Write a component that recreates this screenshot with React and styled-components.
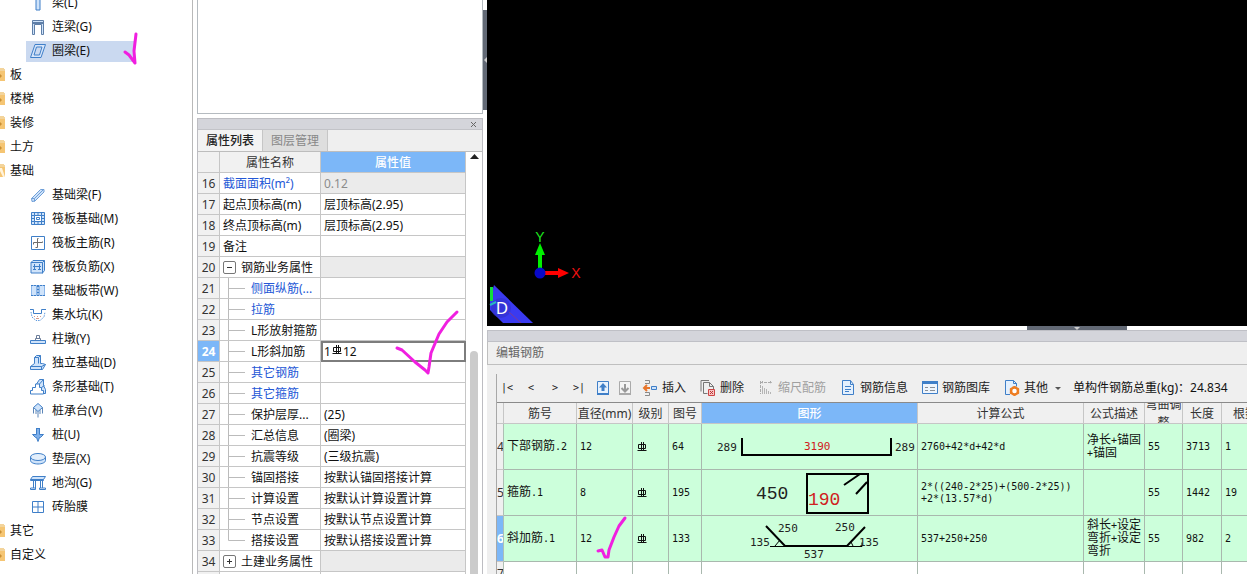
import React from 'react';
import styled, { createGlobalStyle } from 'styled-components';

const colors = {
  line: '#c6c6c6',
  panel: '#efefef',
  bar: '#d4d5db',
  blue: '#7cb7f8',
  link: '#2457d6',
  green: '#ccffdb',
  icon: '#3f7fc8',
  iconFill: '#cfe3fa',
  ink: '#f01fe0',
};

const GlobalStyle = createGlobalStyle`
  * {
    box-sizing: border-box;
  }
  body {
    margin: 0;
    background: #fff;
    color: #111;
    font: 12px/18px 'Noto Sans', 'Noto Sans CJK SC', sans-serif;
  }
  button {
    border: 0;
    padding: 0;
    background: none;
    color: inherit;
    font: inherit;
  }
  table {
    border-collapse: separate;
    border-spacing: 0;
    table-layout: fixed;
  }
  svg {
    display: block;
    flex: none;
  }
`;

const Main = styled.div`
  display: flex;
  height: 100vh;
  overflow: hidden;
`;

/* component tree */

const Sidebar = styled.nav`
  flex: 0 0 193px;
  border-right: 1px solid #b9b9b9;
  overflow: hidden;
`;

const Tree = styled.ul`
  list-style: none;
  margin: -9px 0 0;
  padding: 0;
`;

const TreeRow = styled.li`
  display: flex;
  align-items: center;
  height: 24px;
  padding-left: ${(p) => (p.$child ? '26px' : '0')};
`;

const TreeButton = styled.button`
  position: relative;
  display: flex;
  align-items: center;
  gap: ${(p) => (p.$child ? '6px' : '4px')};
  width: ${(p) => (p.$child ? '108px' : 'auto')};
  height: 21px;
  padding-left: ${(p) => (p.$child ? '4px' : '0')};
  background: ${(p) => (p.$selected ? '#cad9f0' : 'none')};
  white-space: nowrap;
`;

const Ink = styled.svg`
  position: absolute;
  z-index: 2;
  left: ${(p) => p.$left}px;
  top: ${(p) => p.$top}px;
  overflow: visible;
  fill: none;
  stroke: ${colors.ink};
  stroke-width: 3;
  stroke-linecap: round;
  stroke-linejoin: round;
  pointer-events: none;
`;

const Glyph = ({ children }) => (
  <svg
    width="16"
    height="16"
    viewBox="0 0 16 16"
    fill="none"
    stroke={colors.icon}
    strokeWidth="1"
    aria-hidden="true"
  >
    {children}
  </svg>
);

const Folder = ({ open }) => (
  <svg width="6" height="14" viewBox="0 0 6 14" aria-hidden="true">
    <path d="M0 0h4v1h1v2H0z" fill="#f3d49b" />
    <path d="M0 3h5v10H0z" fill="#f5c573" />
    {open ? (
      <path d="M0 4h2l3 9H3L0 7z" fill="#fff3dc" />
    ) : (
      <path d="M0 6l2 2-2 2z" fill="#c98f35" />
    )}
  </svg>
);

const fill = colors.iconFill;

const treeIcons = {
  beam: <path d="M4 0l2 4v11h4V4l2-4M6 4h4" fill={fill} />,
  linkBeam: (
    <>
      <path d="M2.500 1.500h11v14h-2v-10h-7v10h-2z" fill={fill} stroke="#5f7fa8" />
      <path d="M2.500 4h11" stroke="#5f7fa8" strokeWidth="2" />
    </>
  ),
  ringBeam: (
    <path
      d="M5 1.500h10.500L11 14.500H.5zM6.500 4h5.500L9.500 12H4z"
      fill="#d8e6fa"
      fillRule="evenodd"
    />
  ),
  foundBeam: (
    <>
      <path d="M1.500 11.500l9-9 3.500 0 0 2.500-9 9-3 .5z" fill={fill} stroke="#6f9fd8" />
      <path d="M1.500 11.500h3v3M4.500 11.500l9-9" stroke="#6f9fd8" />
    </>
  ),
  raft: (
    <>
      <path d="M1.500 1.500h13v12h-13z" fill={fill} />
      <path d="M4.500 4.500h7v6h-7z" fill="#fff" />
      <path d="M4.500 1.500v3M8 1.500v3M11.500 1.500v3M4.500 10.500v3M8 10.500v3M11.500 10.500v3M1.500 4.500h3M1.500 7.500h3M1.500 10.500h3M11.500 4.500h3M11.500 7.500h3M11.500 10.500h3M6.500 6.500h3v2h-3z" />
    </>
  ),
  raftMain: (
    <>
      <path d="M1.500 1.500h13v13h-13z" />
      <path d="M8.500 3.500h-1v9h-2M3.500 9.500v-2h9v-1" stroke="#6d6d6d" />
    </>
  ),
  raftNeg: (
    <>
      <path d="M1 3.500l2-2h11.500v10l-2 2.500H1z" fill={fill} />
      <path d="M1 3.500h11.500v11M12.500 3.500l2-2M4.500 5v6M9.500 5v6M3 10.500h3M8 10.500h3M3 7.500h8" />
    </>
  ),
  strip: (
    <>
      <path d="M1.500 2.500h5v10h-5zM9.500 2.500h5v10h-5z" fill={fill} stroke="#8bb6ea" />
      <path d="M1 2.500h14M1 12.500h14M7.500 2.500v10M8.500 2.500v10" strokeDasharray="2 1" />
    </>
  ),
  pit: (
    <>
      <path d="M0 2.500h3.500v4h8v-4H16" />
      <path d="M1 5l1 5 4 3.500h4l4-3.500 1-5" stroke="#5f9ade" strokeDasharray="1.500 1" />
      <path d="M4 9.500h1M7 9.500h1M10 9.500h1M6 11.500h3" stroke="#d39a8a" />
    </>
  ),
  pier: (
    <>
      <path d="M.5 9.500h15v3H.5z" fill={fill} />
      <path d="M5.500 9.500v-2h5v2M6.500 7.500v-3h3v3" stroke="#6b7d99" />
    </>
  ),
  isolated: (
    <>
      <path d="M.5 11.500l4-3V2.500l2-2h4v8h2l3 1-3 5H.5z" fill={fill} />
      <path d="M4.500 2.500h4v6M8.500 2.500l2-2M.5 11.500h11l4-2M11.500 11.500v3" />
    </>
  ),
  stripFound: (
    <>
      <path d="M6.500 5l3-4.500h4v6l2 4v4h-5z" fill={fill} />
      <path d="M.5 15v-3.500h2v-3h3V5h4v3.500h2v3h2V15z" fill="#fff" />
      <path d="M9.500 5l4-4.500M11.500 8.500l3-2" />
    </>
  ),
  pileCap: (
    <>
      <path d="M8 .5l4.500 4L8 8.500l-4.500-4z" fill={fill} />
      <path d="M3.500 4.500v6M12.500 4.500v6M8 8.500v6M6 7v4M10 7v4" stroke="#5c86b8" />
    </>
  ),
  pile: (
    <>
      <path d="M6.500 1.500h3v6h4l-3 3h-1l-1.500 4-1.500-4h-1l-3-3h4z" fill="#7fb0ea" />
      <path d="M6 1.500h4" />
    </>
  ),
  cushion: (
    <>
      <path d="M.5 6v3.500c0 2 3.500 3.500 7.500 3.500s7.500-1.500 7.500-3.500V6" fill={fill} />
      <ellipse cx="8" cy="6" rx="7.500" ry="3.500" fill="#e2eefb" />
    </>
  ),
  trench: (
    <>
      <path d="M.5 4.500l2-3h13l-2 3zM3.500 5v8M5.500 5v8M10.500 5v8M12.500 5v8" fill={fill} />
      <path d="M.5 4.500v1h13v-1M.5 14.500v-1.500h5v1.500zM9.500 14.500v-1.500h6v1.500z" />
    </>
  ),
  brick: (
    <>
      <path d="M2.500 2.500h11v11h-11z" />
      <path d="M8 2.500v11M2.500 8h11" />
    </>
  ),
};

const treeItems = [
  { label: '梁(L)', icon: 'beam' },
  { label: '连梁(G)', icon: 'linkBeam' },
  { label: '圈梁(E)', icon: 'ringBeam', selected: true },
  { label: '板' },
  { label: '楼梯' },
  { label: '装修' },
  { label: '土方' },
  { label: '基础', open: true },
  { label: '基础梁(F)', icon: 'foundBeam' },
  { label: '筏板基础(M)', icon: 'raft' },
  { label: '筏板主筋(R)', icon: 'raftMain' },
  { label: '筏板负筋(X)', icon: 'raftNeg' },
  { label: '基础板带(W)', icon: 'strip' },
  { label: '集水坑(K)', icon: 'pit' },
  { label: '柱墩(Y)', icon: 'pier' },
  { label: '独立基础(D)', icon: 'isolated' },
  { label: '条形基础(T)', icon: 'stripFound' },
  { label: '桩承台(V)', icon: 'pileCap' },
  { label: '桩(U)', icon: 'pile' },
  { label: '垫层(X)', icon: 'cushion' },
  { label: '地沟(G)', icon: 'trench' },
  { label: '砖胎膜', icon: 'brick' },
  { label: '其它' },
  { label: '自定义' },
];

const ComponentTree = () => (
  <Sidebar>
    <Tree>
      {treeItems.map((item) => (
        <TreeRow key={item.label} $child={!!item.icon}>
          <TreeButton type="button" $child={!!item.icon} $selected={item.selected}>
            {item.icon ? <Glyph>{treeIcons[item.icon]}</Glyph> : <Folder open={item.open} />}
            {item.label}
            {item.selected && (
              <Ink $left={98} $top={-8} width="16" height="32">
                <path d="M1 19l4 3 6 8-1-12 2-17" />
              </Ink>
            )}
          </TreeButton>
        </TreeRow>
      ))}
    </Tree>
  </Sidebar>
);

/* property list */

const Middle = styled.section`
  flex: 0 0 286px;
  display: flex;
  flex-direction: column;
  gap: 4px;
  margin-left: 4px;
`;

const UpperPanel = styled.div`
  flex: 0 0 114px;
  border: 1px solid #b5bbc0;
  border-top: 0;
`;

const Panel = styled.div`
  flex: 1;
  min-height: 0;
  display: flex;
  flex-direction: column;
  border: 1px solid #bdbdc2;
  border-bottom: 0;
`;

const PanelBar = styled.div`
  display: flex;
  justify-content: flex-end;
  align-items: center;
  height: 11px;
  padding-right: 5px;
  background: ${colors.bar};
  border-bottom: 1px solid #c2c3c8;
`;

const CloseButton = styled.button`
  width: 7px;
  height: 7px;
`;

const Tabs = styled.div`
  display: flex;
  height: 22px;
  background: ${colors.panel};
  border-bottom: 1px solid #bdbdbd;
`;

const Tab = styled.button`
  width: 65px;
  border-right: 1px solid ${colors.line};
  background: ${(p) => (p.$active ? '#f3f3f3' : '#dedede')};
  color: ${(p) => (p.$active ? '#222' : '#888')};
  font-weight: ${(p) => (p.$active ? 500 : 400)};
`;

const PanelBody = styled.div`
  flex: 1;
  min-height: 0;
  display: flex;
  overflow: hidden;
`;

const PropTable = styled.table`
  flex: none;
  width: 268px;
  height: max-content;
`;

const PropHead = styled.th`
  height: 21px;
  padding: 1px 0 0;
  border-right: 1px solid ${colors.line};
  border-bottom: 1px solid ${colors.line};
  background: ${(p) => (p.$active ? colors.blue : '#f1f1f1')};
  color: ${(p) => (p.$active ? '#fff' : '#333')};
  font-weight: ${(p) => (p.$active ? 500 : 400)};
`;

const RowNumber = styled.th`
  height: 21px;
  padding: 1px 0 0;
  border-right: 1px solid ${colors.line};
  border-bottom: 1px solid ${colors.line};
  background: ${(p) => (p.$active ? colors.blue : '#f1f1f1')};
  color: ${(p) => (p.$active ? '#fff' : '#333')};
  font-weight: ${(p) => (p.$active ? 700 : 400)};
`;

const PropName = styled.td`
  height: 21px;
  padding: 0 0 0 3px;
  border-right: 1px solid ${colors.line};
  border-bottom: 1px solid ${colors.line};
  color: ${(p) => (p.$link ? colors.link : '#111')};
  white-space: nowrap;
  overflow: hidden;
`;

const NameLine = styled.div`
  display: flex;
  align-items: center;
  height: 20px;
  line-height: 18px;
`;

const NameText = styled.span`
  padding-top: 1px;
`;

const PropValue = styled.td`
  position: relative;
  height: 21px;
  padding: ${(p) => (p.$focused ? '0 0 0 1px' : '1px 0 0 3px')};
  border: ${(p) => (p.$focused ? '2px solid #7d7d7d' : 'solid ' + colors.line)};
  border-width: ${(p) => (p.$focused ? '2px' : '0 1px 1px 0')};
  background: ${(p) => (p.$locked ? '#ebebeb' : '#fff')};
  color: ${(p) => (p.$muted ? '#8c8c8c' : '#111')};
  line-height: ${(p) => (p.$focused ? '16px' : '18px')};
  white-space: nowrap;
  outline: none;
`;

const ValueLine = styled.span`
  display: flex;
`;

const Branch = styled.svg`
  margin-right: 6px;
`;

const Expander = styled.button`
  display: flex;
  align-items: center;
  justify-content: center;
  width: 13px;
  height: 13px;
  margin-right: 5px;
  border: 1px solid #777;
  border-radius: 2px;
  background: #fff;
`;

const ScrollGutter = styled.div`
  flex: 1;
  display: flex;
  flex-direction: column;
  align-items: center;
  padding-top: 2px;
`;

const ScrollThumb = styled.div`
  flex: 1;
  width: 8px;
  margin-top: 192px;
  border-radius: 4px 4px 0 0;
  background: #cbcbcb;
`;

const Rebar = () => (
  <svg width="12" height="12" viewBox="0 0 12 12" fill="none" stroke="#111" aria-label="HRB400">
    <path d="M2.500 3.500h7v4h-7zM5.500 1v9M7.500 1v9M1.500 9.500h9" />
  </svg>
);

const props = [
  { n: 16, name: '截面面积(m²)', value: '0.12', link: true, locked: true, muted: true },
  { n: 17, name: '起点顶标高(m)', value: '层顶标高(2.95)' },
  { n: 18, name: '终点顶标高(m)', value: '层顶标高(2.95)' },
  { n: 19, name: '备注', value: '' },
  { n: 20, name: '钢筋业务属性', value: '', group: 'open', locked: true },
  { n: 21, name: '侧面纵筋(...', value: '', child: true, link: true },
  { n: 22, name: '拉筋', value: '', child: true, link: true },
  { n: 23, name: 'L形放射箍筋', value: '', child: true },
  { n: 24, name: 'L形斜加筋', value: 'rebar', child: true, focused: true },
  { n: 25, name: '其它钢筋', value: '', child: true, link: true },
  { n: 26, name: '其它箍筋', value: '', child: true, link: true },
  { n: 27, name: '保护层厚...', value: '(25)', child: true },
  { n: 28, name: '汇总信息', value: '(圈梁)', child: true },
  { n: 29, name: '抗震等级', value: '(三级抗震)', child: true },
  { n: 30, name: '锚固搭接', value: '按默认锚固搭接计算', child: true },
  { n: 31, name: '计算设置', value: '按默认计算设置计算', child: true },
  { n: 32, name: '节点设置', value: '按默认节点设置计算', child: true },
  { n: 33, name: '搭接设置', value: '按默认搭接设置计算', child: true, last: true },
  { n: 34, name: '土建业务属性', value: '', group: 'closed', locked: true },
];

const PropertyPanel = () => (
  <Middle>
    <UpperPanel />
    <Panel>
      <PanelBar>
        <CloseButton type="button" aria-label="关闭">
          <svg width="7" height="7" viewBox="0 0 7 7" stroke="#666">
            <path d="M1 1l5 5M6 1l-5 5" />
          </svg>
        </CloseButton>
      </PanelBar>
      <Tabs>
        <Tab type="button" $active>
          属性列表
        </Tab>
        <Tab type="button">图层管理</Tab>
      </Tabs>
      <PanelBody>
        <PropTable>
          <colgroup>
            <col width="22" />
            <col width="101" />
            <col width="145" />
          </colgroup>
          <thead>
            <tr>
              <PropHead />
              <PropHead>属性名称</PropHead>
              <PropHead $active>属性值</PropHead>
            </tr>
          </thead>
          <tbody>
            {props.map((row) => (
              <tr key={row.n}>
                <RowNumber scope="row" $active={row.focused}>
                  {row.n}
                </RowNumber>
                <PropName $link={row.link}>
                  <NameLine>
                    {row.child && (
                      <Branch width="22" height="20" viewBox="0 0 22 20" stroke="#bbb" fill="none">
                        <path d={row.last ? 'M5.500 0v10.500H22' : 'M5.500 0v20M5.500 10.500H22'} />
                      </Branch>
                    )}
                    {row.group && (
                      <Expander type="button" aria-label={row.name}>
                        <svg width="7" height="7" viewBox="0 0 7 7" stroke="#333">
                          <path d={row.group === 'open' ? 'M1 3.500h5' : 'M1 3.500h5M3.500 1v5'} />
                        </svg>
                      </Expander>
                    )}
                    <NameText>{row.name}</NameText>
                  </NameLine>
                </PropName>
                <PropValue
                  $locked={row.locked}
                  $muted={row.muted}
                  $focused={row.focused}
                  tabIndex={row.focused ? 0 : undefined}
                >
                  {row.focused ? (
                    <>
                      <ValueLine>
                        1<Rebar />
                        12
                      </ValueLine>
                      <Ink $left={73} $top={-31} width="64" height="64">
                        <path d="M1 36l5 2 13 12 10 8 3 3 1-6 2-14 8-19 8-12 10-10" />
                      </Ink>
                    </>
                  ) : (
                    row.value
                  )}
                </PropValue>
              </tr>
            ))}
            <tr>
              <RowNumber />
              <PropName />
              <PropValue />
            </tr>
          </tbody>
        </PropTable>
        <ScrollGutter>
          <svg width="9" height="5" viewBox="0 0 9 5">
            <path d="M0 5l4.500-5L9 5z" fill="#222" />
          </svg>
          <ScrollThumb />
        </ScrollGutter>
      </PanelBody>
    </Panel>
  </Middle>
);

/* splitters */

const SideSplitter = styled.div`
  flex: 0 0 4px;
  padding-top: 10px;
`;

const SideHandle = styled.button`
  display: flex;
  align-items: center;
  width: 4px;
  height: 100px;
  background: #626975;
`;

const BottomSplitter = styled.div`
  flex: 0 0 4px;
  display: flex;
  padding-left: 540px;
`;

const BottomHandle = styled.button`
  display: flex;
  justify-content: center;
  width: 100px;
  height: 4px;
  background: #626975;
`;

/* drawing area */

const Work = styled.main`
  flex: 1;
  min-width: 0;
  display: flex;
  flex-direction: column;
`;

const Viewport = styled.div`
  flex: 1;
  min-height: 0;
  display: flex;
  align-items: flex-end;
  background: #000;
  overflow: hidden;
`;

const Axes = () => (
  <svg width="130" height="100" viewBox="0 0 130 100">
    <path d="M53 47V28" stroke="#00f000" strokeWidth="4" />
    <path d="M53 17l5 12H48z" fill="#00f000" />
    <path d="M53 47h18" stroke="#f00" strokeWidth="4" />
    <path d="M82 47l-11 5V42z" fill="#f00" />
    <circle cx="53" cy="47" r="5.500" fill="#0808c8" />
    <text x="53" y="16" textAnchor="middle" fill="#1ee61e" fontFamily="Liberation Sans" fontSize="14">
      Y
    </text>
    <text x="89" y="52" textAnchor="middle" fill="#e11" fontFamily="Liberation Sans" fontSize="14">
      X
    </text>
    <path d="M3 73l4-14 39 38H16L3 84z" fill="#3a3af0" />
    <circle cx="14" cy="82" r="10" fill="#3030c8" opacity=".6" />
    <path d="M3 61h3v14H3z" fill="#12e03c" />
    <path d="M3 79l6-3" stroke="#29b8c0" strokeWidth="2" />
    <path d="M22 86l12 11" stroke="#7a3a9a" />
    <text x="15" y="88" textAnchor="middle" fill="#fff" fontFamily="Noto Sans" fontSize="17">
      D
    </text>
  </svg>
);

/* rebar editor */

const Editor = styled.section`
  flex: 0 0 244px;
  display: flex;
  flex-direction: column;
  background: ${colors.panel};
  overflow: hidden;
`;

const EditorBar = styled.div`
  flex: 0 0 12px;
  background: ${colors.bar};
  border: 1px solid #bfc0c6;
  border-right: 0;
`;

const EditorTitle = styled.h2`
  flex: 0 0 22px;
  margin: 0;
  padding-left: 8px;
  border: solid #bfbfbf;
  border-width: 0 0 1px 1px;
  color: #666;
  font-size: 12px;
  font-weight: 400;
  line-height: 22px;
`;

const EditorBody = styled.div`
  flex: 1;
  min-height: 0;
  margin: 9px 0 0 9px;
  border-left: 1px solid #a8a8a8;
  overflow: hidden;
`;

const Toolbar = styled.div`
  display: flex;
  align-items: center;
  height: 28px;
  white-space: nowrap;
`;

const NavGroup = styled.div`
  display: flex;
  gap: 4px;
  margin-right: 6px;
`;

const NavButton = styled.button`
  width: 20px;
  height: 20px;
  color: #222;
  font: 10px/20px 'DejaVu Sans Mono', monospace;
`;

const MoveGroup = styled.div`
  display: flex;
  gap: 6px;
  margin-right: 9px;
`;

const ToolGroup = styled.div`
  display: flex;
  gap: 14px;
  margin-right: 12px;
`;

const ToolButton = styled.button`
  display: flex;
  align-items: center;
  gap: 4px;
  height: 20px;
  color: ${(p) => (p.disabled ? '#a0a0a0' : '#222')};
`;

const Caret = styled.span`
  margin-left: 3px;
  border: solid transparent;
  border-width: 3px 3px 0;
  border-top-color: #555;
`;

const toolIcons = {
  up: (
    <>
      <path d="M2.500 1.500h11v12h-11z" fill="#e8f2fd" />
      <path d="M2 14h12" strokeWidth="2" />
      <path d="M8 3l4 4.500H9.500V11h-3V7.500H4z" fill={colors.icon} stroke="none" />
    </>
  ),
  down: (
    <>
      <path d="M2.500 1.500h11v12h-11z" stroke="#aaa" fill="#f4f4f4" />
      <path d="M2 14h12" stroke="#aaa" strokeWidth="2" />
      <path d="M8 4v7M4.500 8L8 11.500 11.500 8" stroke="#999" strokeWidth="2" />
    </>
  ),
  insert: (
    <>
      <path d="M3 .5h4.500v3H3M3 15.500h4.500v-3H3" stroke="#888" />
      <path d="M2 8h6M5 5L2 8l3 3" stroke="#e8762c" strokeWidth="2" />
      <path d="M9.500 6.500h5v3h-5z" fill={fill} />
    </>
  ),
  remove: (
    <>
      <path d="M1 11.500V.5h8M3.500 13.500v-11h6l4 4v3M3.500 13.500h4M9.500 2.500v4h4" stroke="#777" />
      <path d="M8.500 9.500h6v6h-6z" fill="#f7c4c4" stroke="#c44" />
      <path d="M10 11l3 3M13 11l-3 3" stroke="#b33" />
    </>
  ),
  scale: (
    <>
      <path d="M2.500 1v13M2 2.500h12M5 1L3.500 2.500 5 4M12 1l1.500 1.500L12 4" stroke="#aaa" strokeDasharray="3 1" />
      <path d="M4.500 6v8M6.500 8v6M8.500 9v5M10.500 11v3M12.500 12v2" stroke="#b5b5b5" />
    </>
  ),
  info: (
    <>
      <path d="M2.500.5h8l3 4v10h-11z" fill="#e4f0fd" />
      <path d="M10.500.5v4h3" />
      <path d="M5 6.500h6M5 9.500h6M5 11.500h4" />
    </>
  ),
  library: (
    <>
      <path d="M.5 1.500h15v12H.5z" fill="#eef5fd" />
      <path d="M0 2.500h16" strokeWidth="3" />
      <path d="M3 7.500h3M3 10.500h3M8 7.500h5M8 10.500h5" stroke="#8a8f96" />
    </>
  ),
  other: (
    <>
      <path d="M6 14.500H1.500V.5h8l3 3v3M9.500.5v3h3" fill="#e4f0fd" />
      <circle cx="10.500" cy="11" r="3.500" stroke="#ee7d22" strokeWidth="2.500" fill="#fff" />
      <path d="M10.500 6v2M10.500 14v2M6 8.500l1.500 1M13.500 12.500l1.500 1M6 13.500l1.500-1M13.500 9.500l1.500-1" stroke="#ee7d22" strokeWidth="2" />
    </>
  ),
};

const tools = [
  { label: '插入', icon: 'insert' },
  { label: '删除', icon: 'remove' },
  { label: '缩尺配筋', icon: 'scale', disabled: true },
  { label: '钢筋信息', icon: 'info' },
  { label: '钢筋图库', icon: 'library' },
  { label: '其他', icon: 'other', menu: true },
];

const RebarTable = styled.table`
  width: 100%;
  min-width: 772px;
  border-top: 1px solid #8a8a8a;
  background: #fff;
`;

const Head = styled.th`
  height: 21px;
  padding: 0;
  border-right: 1px solid ${colors.line};
  border-bottom: 1px solid ${colors.line};
  background: ${(p) => (p.$active ? colors.blue : '#f0f0f0')};
  color: ${(p) => (p.$active ? '#fff' : '#333')};
  font-weight: ${(p) => (p.$active ? 500 : 400)};
`;

const HeadText = styled.div`
  display: flex;
  align-items: center;
  justify-content: center;
  height: 20px;
  padding-top: 1px;
  overflow: hidden;
`;

const RowHead = styled.th`
  height: ${(p) => (p.$empty ? '24px' : '46px')};
  padding: 0;
  border-right: 1px solid #aebfb4;
  border-bottom: 1px solid ${colors.line};
  background: ${(p) => (p.$active ? colors.blue : '#f0f0f0')};
  color: ${(p) => (p.$active ? '#fff' : '#333')};
  font-weight: ${(p) => (p.$active ? 700 : 400)};
  overflow: hidden;
`;

const Cell = styled.td`
  position: relative;
  padding: 0 0 0 ${(p) => (p.$flush ? '0' : '3px')};
  border-right: 1px solid #a9b8ae;
  border-bottom: 1px solid #a9b8ae;
  background: ${(p) => (p.$empty ? '#fff' : colors.green)};
  font: 10px/12px 'DejaVu Sans Mono', 'Noto Sans CJK SC', monospace;
`;

const Han = styled.span`
  font-size: 12px;
`;

const Shape = styled.svg`
  font-family: ${(p) => (p.$large ? "'Liberation Mono'" : "'DejaVu Sans Mono'")}, monospace;
  font-size: ${(p) => (p.$large ? '18px' : '11px')};
  fill: #222;
`;

// Chinese runs are a size larger than the digits beside them
const Mixed = ({ text }) =>
  text
    .split(/([\u4e00-\u9fff]+)/)
    .filter(Boolean)
    .map((part, i) => (/[\u4e00-\u9fff]/.test(part) ? <Han key={i}>{part}</Han> : part));

const shapes = {
  64: (
    <Shape width="215" height="45" viewBox="0 0 215 45">
      <path d="M40 14v17h149V14" fill="none" stroke="#000" strokeWidth="2" />
      <text x="15" y="27">289</text>
      <text x="102" y="26" fill="#d02020">3190</text>
      <text x="193" y="27">289</text>
    </Shape>
  ),
  195: (
    <Shape $large width="215" height="45" viewBox="0 0 215 45">
      <path d="M105 4h61v39h-61zM142 15l16-11M154 24l11-12" fill="none" stroke="#000" strokeWidth="2" />
      <text x="54" y="29">450</text>
      <text x="106" y="35" fill="#d02020">190</text>
    </Shape>
  ),
  133: (
    <Shape width="215" height="45" viewBox="0 0 215 45">
      <path d="M64 10l19 20h62l18-19" fill="none" stroke="#000" strokeWidth="2" />
      <path d="M68 30.500h92v-4M73 30l5-6M151 30l-2-4" fill="none" stroke="#000" />
      <text x="76" y="16">250</text>
      <text x="133" y="15">250</text>
      <text x="48" y="30">135</text>
      <text x="157" y="30">135</text>
      <text x="102" y="42">537</text>
    </Shape>
  ),
};

const columns = [
  { label: '', width: 7 },
  { label: '筋号', width: 73 },
  { label: '直径(mm)', width: 56 },
  { label: '级别', width: 36 },
  { label: '图号', width: 33 },
  { label: '图形', width: 216, active: true },
  { label: '计算公式', width: 166 },
  { label: '公式描述', width: 61 },
  { label: '弯曲调整', width: 38 },
  { label: '长度', width: 39 },
  { label: '根数' },
];

const rebars = [
  { n: 4, name: '下部钢筋.2', dia: 12, shape: 64, formula: ['2760+42*d+42*d'], desc: '净长+锚固+锚固', bend: 55, len: 3713, count: 1 },
  { n: 5, name: '箍筋.1', dia: 8, shape: 195, formula: ['2*((240-2*25)+(500-2*25))', '+2*(13.57*d)'], desc: '', bend: 55, len: 1442, count: 19 },
  { n: 6, name: '斜加筋.1', dia: 12, shape: 133, formula: ['537+250+250'], desc: '斜长+设定弯折+设定弯折', bend: 55, len: 982, count: 2, active: true },
];

const RebarEditor = () => (
  <Editor>
    <EditorBar />
    <EditorTitle>编辑钢筋</EditorTitle>
    <EditorBody>
      <Toolbar>
        <NavGroup>
          {['|<', '<', '>', '>|'].map((sign) => (
            <NavButton type="button" key={sign}>
              {sign}
            </NavButton>
          ))}
        </NavGroup>
        <MoveGroup>
          <ToolButton type="button" aria-label="上移">
            <Glyph>{toolIcons.up}</Glyph>
          </ToolButton>
          <ToolButton type="button" aria-label="下移" disabled>
            <Glyph>{toolIcons.down}</Glyph>
          </ToolButton>
        </MoveGroup>
        <ToolGroup>
          {tools.map((tool) => (
            <ToolButton type="button" key={tool.label} disabled={tool.disabled}>
              <Glyph>{toolIcons[tool.icon]}</Glyph>
              {tool.label}
              {tool.menu && <Caret />}
            </ToolButton>
          ))}
        </ToolGroup>
        <span>单构件钢筋总重(kg)：24.834</span>
      </Toolbar>
      <RebarTable>
        <colgroup>
          {columns.map((col) => (
            <col key={col.label} width={col.width} />
          ))}
        </colgroup>
        <thead>
          <tr>
            {columns.map((col) => (
              <Head key={col.label} $active={col.active}>
                <HeadText>{col.label}</HeadText>
              </Head>
            ))}
          </tr>
        </thead>
        <tbody>
          {rebars.map((row) => (
            <tr key={row.n}>
              <RowHead scope="row" $active={row.active}>
                {row.n}
              </RowHead>
              <Cell>
                <Mixed text={row.name} />
              </Cell>
              <Cell>
                {row.dia}
                {row.active && (
                  <Ink $left={20} $top={0} width="30" height="44">
                    <path d="M1 35l4-1 3 7 3 0 1-7 5-13 5-11 6-8" />
                  </Ink>
                )}
              </Cell>
              <Cell>
                <Rebar />
              </Cell>
              <Cell>{row.shape}</Cell>
              <Cell $flush>{shapes[row.shape]}</Cell>
              <Cell>
                {row.formula.map((line) => (
                  <div key={line}>{line}</div>
                ))}
              </Cell>
              <Cell>
                <Mixed text={row.desc} />
              </Cell>
              <Cell>{row.bend}</Cell>
              <Cell>{row.len}</Cell>
              <Cell>{row.count}</Cell>
            </tr>
          ))}
          <tr>
            <RowHead scope="row" $empty>
              7
            </RowHead>
            {columns.slice(1).map((col) => (
              <Cell key={col.label} $empty />
            ))}
          </tr>
        </tbody>
      </RebarTable>
    </EditorBody>
  </Editor>
);

const App = () => {
  return (
    <>
      <GlobalStyle />
      <Main>
        <ComponentTree />
        <PropertyPanel />
        <SideSplitter>
          <SideHandle type="button" aria-label="收起">
            <svg width="4" height="6" viewBox="0 0 4 6">
              <path d="M4 0v6L1 3z" fill="#ccc" />
            </svg>
          </SideHandle>
        </SideSplitter>
        <Work>
          <Viewport>
            <Axes />
          </Viewport>
          <BottomSplitter>
            <BottomHandle type="button" aria-label="收起">
              <svg width="6" height="4" viewBox="0 0 6 4">
                <path d="M0 1h6L3 4z" fill="#ccc" />
              </svg>
            </BottomHandle>
          </BottomSplitter>
          <RebarEditor />
        </Work>
      </Main>
    </>
  );
};

export default App;
